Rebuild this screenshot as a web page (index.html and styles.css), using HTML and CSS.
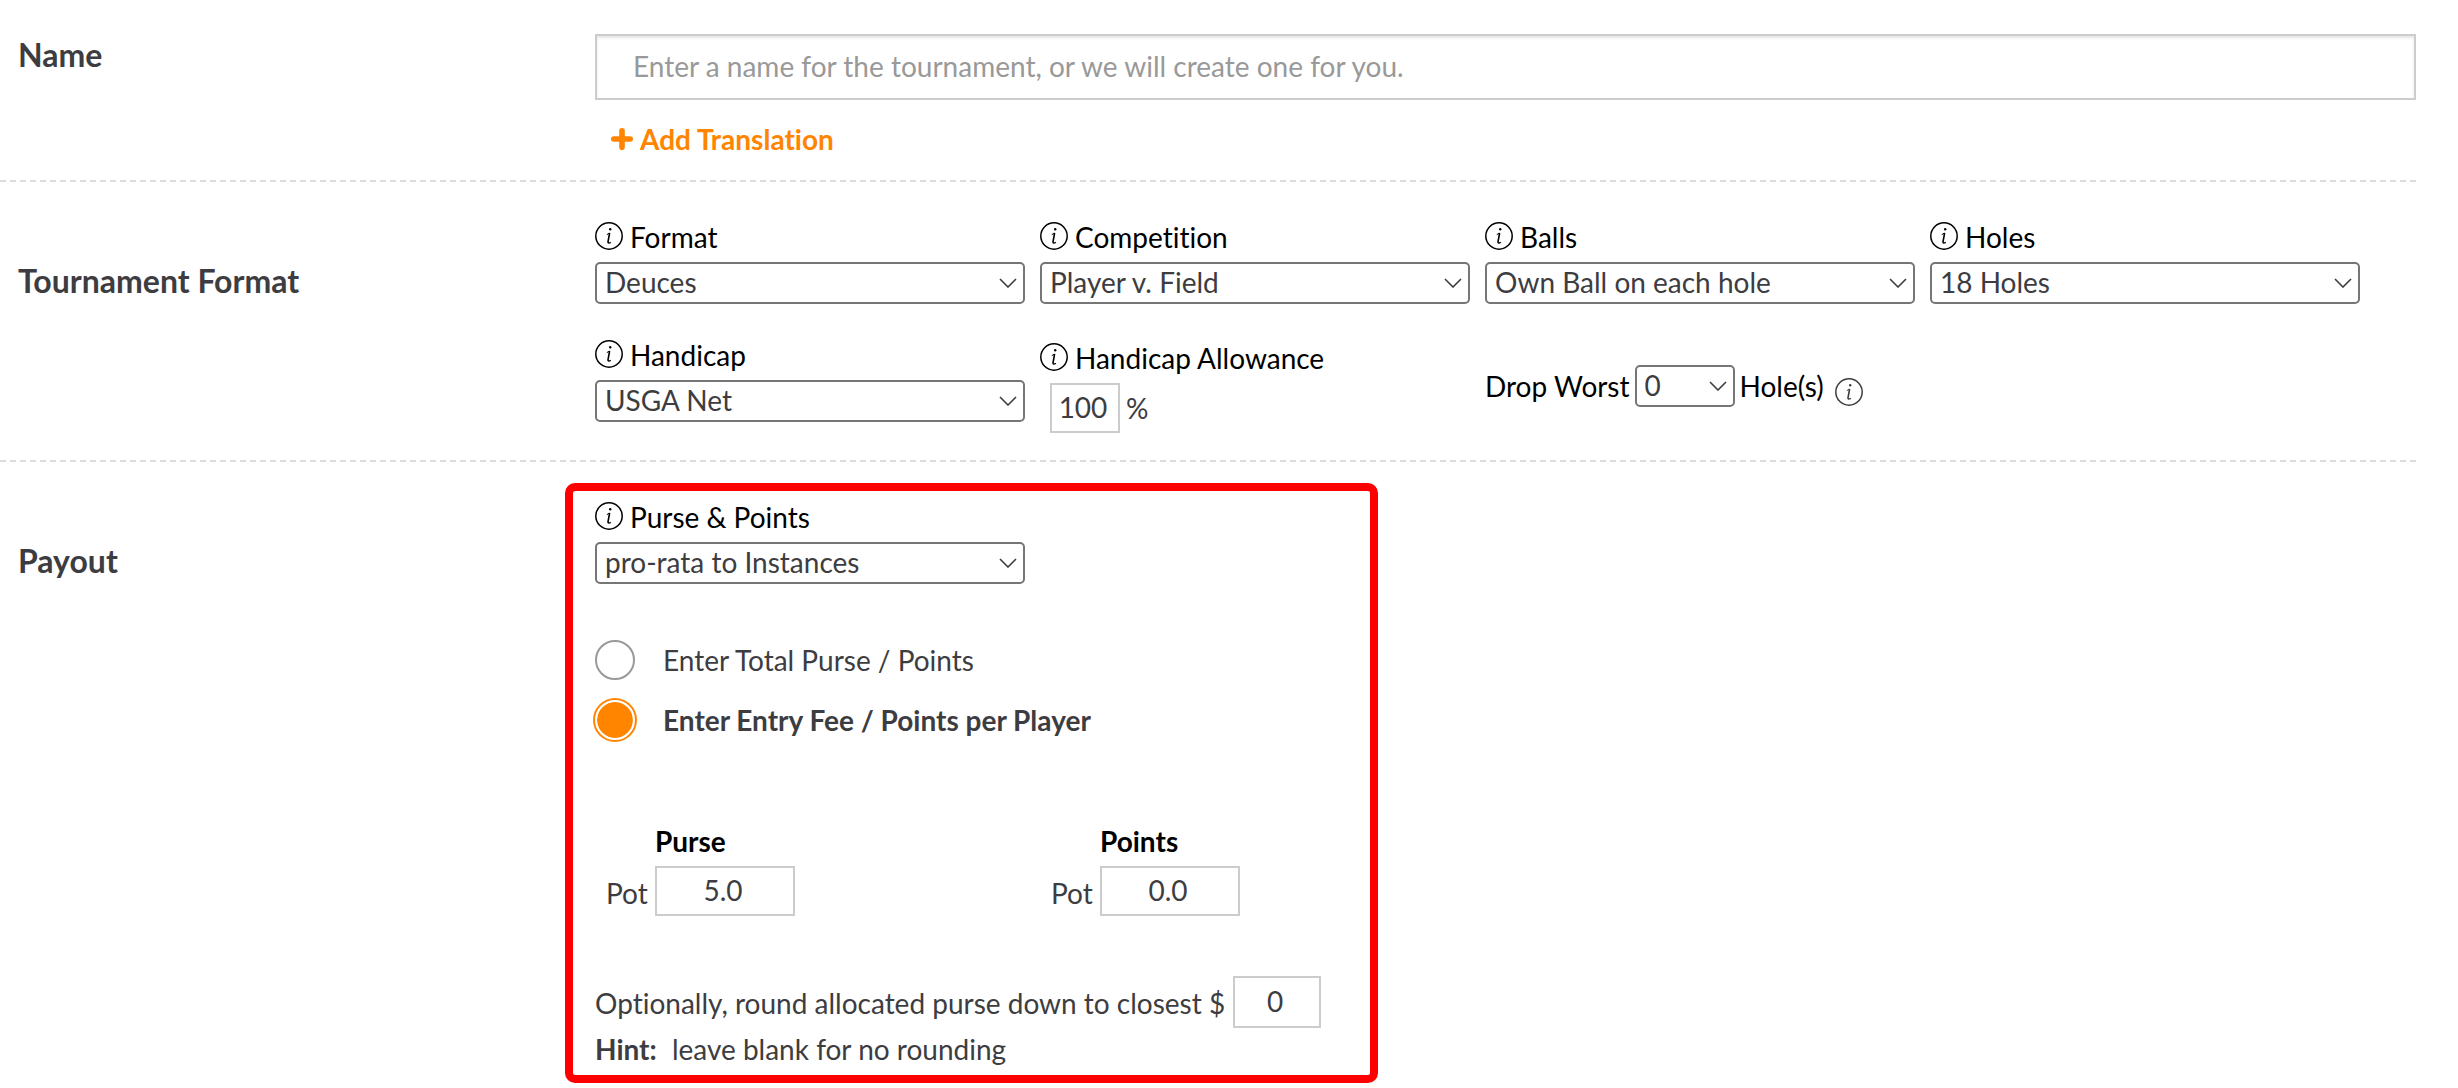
FILE: index.html
```html
<!DOCTYPE html>
<html lang="en">
<head>
    <meta charset="UTF-8">
    <meta name="viewport" content="width=device-width, initial-scale=1.0">
    <title>Tournament</title>
    <link rel="stylesheet" href="styles.css">
</head>
<body>

    <!-- shared icons -->
    <svg class="sprite" aria-hidden="true">
        <symbol id="info" viewBox="0 0 28 28">
            <circle cx="14" cy="14" r="13.2" fill="none" stroke="currentColor" stroke-width="1.5"/>
            <circle cx="15.2" cy="7.2" r="1.2" fill="currentColor"/>
            <path d="M11.8 12.6 L14.4 11.2" fill="none" stroke="currentColor" stroke-width="1"/>
            <path d="M14.6 11 L13 19.8 Q12.8 21.8 15.8 20.4" fill="none" stroke="currentColor" stroke-width="1.6"/>
        </symbol>
        <symbol id="arrow" viewBox="0 0 18 10">
            <path d="M1 1 L9 9 L17 1" fill="none" stroke="currentColor" stroke-width="1.6"/>
        </symbol>
    </svg>

    <form>
        <section class="row">
            <h2>Name</h2>
            <div class="content name">
                <input type="text" class="name-input" aria-label="Name" placeholder="Enter a name for the tournament, or we will create one for you.">
                <a href="#" class="add">
                    <svg viewBox="0 0 22 22"><path d="M11 2.8 V19.2 M2.8 11 H19.2" stroke="currentColor" stroke-width="5.6" stroke-linecap="round"/></svg>
                    Add Translation
                </a>
            </div>
        </section>

        <section class="row">
            <h2>Tournament Format</h2>
            <div class="content fields">
                <div class="field">
                    <label for="format"><svg class="info"><use href="#info"/></svg>Format</label>
                    <span class="select">
                        <select id="format"><option>Deuces</option></select>
                        <svg><use href="#arrow"/></svg>
                    </span>
                </div>
                <div class="field">
                    <label for="competition"><svg class="info"><use href="#info"/></svg>Competition</label>
                    <span class="select">
                        <select id="competition"><option>Player v. Field</option></select>
                        <svg><use href="#arrow"/></svg>
                    </span>
                </div>
                <div class="field">
                    <label for="balls"><svg class="info"><use href="#info"/></svg>Balls</label>
                    <span class="select">
                        <select id="balls"><option>Own Ball on each hole</option></select>
                        <svg><use href="#arrow"/></svg>
                    </span>
                </div>
                <div class="field">
                    <label for="holes"><svg class="info"><use href="#info"/></svg>Holes</label>
                    <span class="select">
                        <select id="holes"><option>18 Holes</option></select>
                        <svg><use href="#arrow"/></svg>
                    </span>
                </div>

                <div class="field">
                    <label for="handicap"><svg class="info"><use href="#info"/></svg>Handicap</label>
                    <span class="select">
                        <select id="handicap"><option>USGA Net</option></select>
                        <svg><use href="#arrow"/></svg>
                    </span>
                </div>
                <div class="field allowance">
                    <label for="allowance"><svg class="info"><use href="#info"/></svg>Handicap Allowance</label>
                    <div class="percent">
                        <input type="text" id="allowance" class="box" value="100">
                        <span>%</span>
                    </div>
                </div>
                <div class="drop">
                    <label for="drop">Drop Worst</label>
                    <span class="select">
                        <select id="drop"><option>0</option></select>
                        <svg><use href="#arrow"/></svg>
                    </span>
                    <label for="drop">Hole(s)</label>
                    <svg class="info"><use href="#info"/></svg>
                </div>
            </div>
        </section>

        <section class="row last">
            <h2>Payout</h2>
            <div class="payout">
                <div class="field">
                    <label for="purse-points"><svg class="info"><use href="#info"/></svg>Purse &amp; Points</label>
                    <span class="select">
                        <select id="purse-points"><option>pro-rata to Instances</option></select>
                        <svg><use href="#arrow"/></svg>
                    </span>
                </div>

                <div class="radios">
                    <label><input type="radio" name="mode">Enter Total Purse / Points</label>
                    <label><input type="radio" name="mode" checked>Enter Entry Fee / Points per Player</label>
                </div>

                <div class="pots">
                    <div class="pot">
                        <strong>Purse</strong>
                        <label for="purse">Pot</label>
                        <input type="text" id="purse" class="box" value="5.0">
                    </div>
                    <div class="pot">
                        <strong>Points</strong>
                        <label for="points">Pot</label>
                        <input type="text" id="points" class="box" value="0.0">
                    </div>
                </div>

                <div class="round">
                    <label for="round">Optionally, round allocated purse down to closest $</label>
                    <input type="text" id="round" class="box" value="0">
                </div>
                <p class="hint"><b>Hint:</b> leave blank for no rounding</p>
            </div>
        </section>
    </form>

</body>
</html>
```

FILE: styles.css
```css
*{
    box-sizing: border-box;
}

body{
    margin: 0;
    background-color: #fff;
    color: #3d3d41;
    font-family: Lato, "Open Sans", sans-serif;
    font-size: 28px;
    line-height: 34px;
    font-variant-ligatures: none;
}

input, select{
    font: inherit;
    font-variant-ligatures: none;
    color: inherit;
    margin: 0;
}

.sprite{
    display: none;
}

/* rows */
.row{
    display: grid;
    grid-template-columns: 595px 1fr;
    margin-right: 42px;
    border-bottom: 2px dashed #dcdcdc;
}

.last{
    border-bottom: none;
}

h2{
    margin: 80px 0 0;
    padding-left: 18px;
    font-size: 32px;
    line-height: 38px;
}

.row:first-child h2{
    margin-top: 36px;
}

/* name */
.name{
    padding: 34px 0 24px;
}

.name-input{
    display: block;
    width: 100%;
    height: 66px;
    padding: 0 36px 2px;
    border: 2px solid #ccc;
    box-shadow: inset 0 2px 3px rgba(0,0,0,0.1);
}

.name-input::placeholder{
    color: #999;
    opacity: 1;
}

.add{
    display: inline-flex;
    align-items: center;
    gap: 7px;
    margin: 22px 0 0 16px;
    color: #ff8500;
    font-weight: bold;
    text-decoration: none;
    vertical-align: top;
}

.add svg{
    width: 22px;
    height: 22px;
}

/* format */
.fields{
    display: grid;
    grid-template-columns: repeat(4, 1fr);
    gap: 34px 15px;
    padding: 38px 56px 27px 0;
}

.field label{
    display: flex;
    align-items: center;
    gap: 7px;
    margin-bottom: 8px;
    color: #000;
}

.info{
    width: 28px;
    height: 28px;
    margin-bottom: 2px;
    flex: none;
}

.select{
    display: block;
    position: relative;
}

.select select{
    display: block;
    appearance: none;
    width: 100%;
    height: 42px;
    padding: 0 36px 2px 8px;
    border: 2px solid #767676;
    border-radius: 5px;
    background-color: #fff;
}

.select svg{
    position: absolute;
    top: 16px;
    right: 8px;
    width: 18px;
    height: 10px;
    pointer-events: none;
}

.box{
    height: 50px;
    padding: 0 4px 3px 0;
    border: 2px solid #ccc;
    text-align: center;
}

.allowance{
    padding-top: 3px;
}

.percent{
    display: flex;
    align-items: center;
    gap: 6px;
    padding-left: 10px;
}

.percent .box{
    width: 70px;
}

.drop{
    display: flex;
    align-items: center;
    align-self: center;
    gap: 5px;
    color: #000;
}

.drop .select{
    width: 100px;
    color: #3d3d41;
}

.drop .info{
    margin: 12px 0 0 6px;
    color: #3d3d41;
}

/* payout */
.payout{
    width: 813px;
    margin: 21px 0 0 -30px;
    padding: 9px 22px 9px;
    border: 8px solid #f00;
    border-radius: 10px;
}

.payout .field{
    width: 430px;
}

.radios{
    display: flex;
    flex-direction: column;
    gap: 20px;
    margin-top: 56px;
}

.radios label{
    display: flex;
    align-items: center;
    gap: 28px;
}

.radios label:has(:checked){
    font-weight: bold;
}

.radios input{
    appearance: none;
    width: 40px;
    height: 40px;
    border: 2px solid #999;
    border-radius: 50%;
}

.radios input:checked{
    border-color: #fff;
    background-color: #ff8500;
    background-clip: padding-box;
    box-shadow: 0 0 0 2px #ff8500;
}

.pots{
    display: grid;
    grid-template-columns: 445px 1fr;
    margin-top: 84px;
}

.pot{
    display: grid;
    grid-template-columns: 60px 140px;
    row-gap: 8px;
    align-items: center;
}

.pot strong{
    grid-column: 2;
    color: #000;
}

.pot label{
    padding: 4px 0 0 11px;
}

.round{
    display: flex;
    align-items: center;
    gap: 8px;
    margin-top: 60px;
}

.round label{
    padding-top: 2px;
}

.round .box{
    width: 88px;
    height: 52px;
}

.hint{
    margin: 4px 0 0;
}

.hint b{
    margin-right: 8px;
}
```
